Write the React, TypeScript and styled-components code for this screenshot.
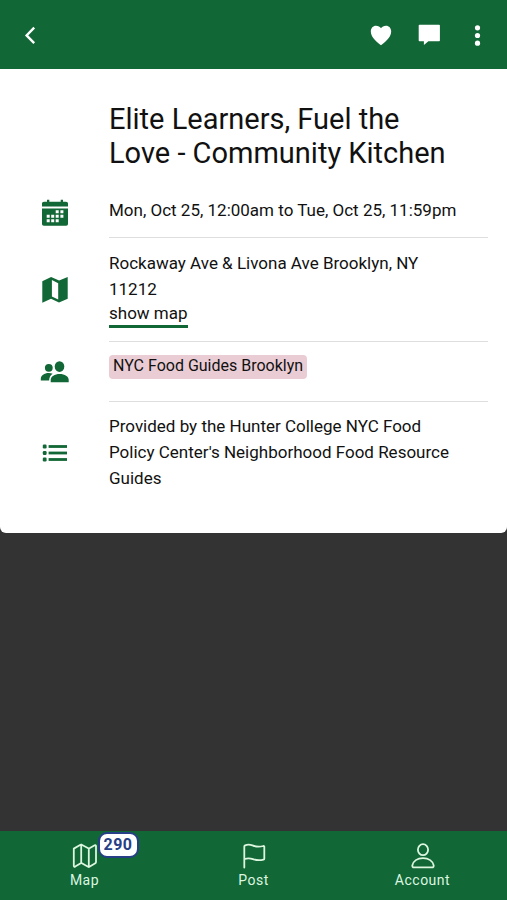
import React from "react";
import styled, { createGlobalStyle } from "styled-components";

const green = "#116735";
const ink = "#111111";

const GlobalStyle = createGlobalStyle`
  * { box-sizing: border-box; }
  body {
    margin: 0;
    background: #333333;
    color: ${ink};
    font-family: Roboto, "Liberation Sans", sans-serif;
    font-size: 17px;
    line-height: 26px;
  }
  button { font: inherit; border: 0; background: none; padding: 0; cursor: pointer; }
  svg { display: block; }
`;

const Page = styled.div`
  min-height: 100vh;
  display: flex;
  flex-direction: column;
`;

const Header = styled.header`
  height: 69px;
  padding: 0 18px;
  display: flex;
  align-items: center;
  justify-content: space-between;
  background: ${green};
`;

const Actions = styled.div`
  display: flex;
  gap: 24px;
`;

const IconButton = styled.button`
  width: 24px;
  height: 24px;
  color: #ffffff;
`;

const Main = styled.main`
  flex: 1;
`;

const Card = styled.article`
  padding: 33px 19px 29px 0;
  background: #ffffff;
  border-radius: 0 0 6px 6px;
`;

const Title = styled.h1`
  margin: 0 0 18px 109px;
  padding-right: 24px;
  font-size: 29px;
  line-height: 34px;
  font-weight: 400;
`;

const Row = styled.section`
  display: grid;
  grid-template-columns: 109px 1fr;
  align-items: center;
`;

const RowIcon = styled.div`
  display: flex;
  justify-content: center;
  color: ${green};
`;

const RowBody = styled.div<{ $top?: number; $bottom?: number; $last?: boolean }>`
  padding: ${(p) => p.$top ?? 12}px 24px ${(p) => p.$bottom ?? 13}px 0;
  border-bottom: ${(p) => (p.$last ? "0" : "1px solid #dedede")};
`;

const Text = styled.p`
  margin: 0;
`;

const MapLink = styled.a`
  display: block;
  width: fit-content;
  line-height: 23px;
  color: inherit;
  text-decoration: none;
  border-bottom: 3px solid ${green};
`;

const Tag = styled.span`
  display: block;
  width: fit-content;
  padding: 0 4px 2px;
  border-radius: 4px;
  background: #eaccd4;
  font-size: 16px;
  line-height: 22px;
`;

const Nav = styled.nav`
  position: sticky;
  bottom: 0;
  height: 69px;
  display: grid;
  grid-template-columns: repeat(3, 1fr);
  background: ${green};
`;

const Tab = styled.button`
  && {
    display: flex;
    flex-direction: column;
    align-items: center;
    padding-top: 12px;
    gap: 2px;
    color: #dcf6e0;
    font-size: 14px;
    line-height: 18px;
    letter-spacing: 0.5px;
  }
`;

const TabIcon = styled.span`
  position: relative;
`;

const Badge = styled.span`
  position: absolute;
  left: 26px;
  top: -11px;
  padding: 1px 4px;
  border: 2px solid #263f86;
  border-radius: 9px;
  background: #ffffff;
  color: #263f86;
  font-size: 16px;
  line-height: 20px;
  font-weight: 700;
`;

const BackIcon = () => (
  <svg width="24" height="24" viewBox="0 0 24 24" fill="none" stroke="currentColor" strokeWidth="2.4" aria-hidden="true">
    <path d="M16.2 4.7 8.6 12.4l7.6 7.7" />
  </svg>
);

const HeartIcon = () => (
  <svg width="24" height="24" viewBox="0 0 24 24" fill="currentColor" aria-hidden="true">
    <path d="M12 22.300C9 19.800 1.800 14.600 1.800 8.500c0-3.400 2.200-5.700 5.200-5.700 2.200 0 4 .9 5 2.500 1-1.600 2.800-2.500 5-2.500 3 0 5.200 2.300 5.200 5.700 0 6.100-7.200 11.300-10.200 13.800z" />
  </svg>
);

const CommentIcon = () => (
  <svg width="24" height="24" viewBox="0 0 24 24" fill="currentColor" aria-hidden="true">
    <path d="M2.500 1.800h19.600c.5 0 .8.300.8.800v14.900c0 .5-.3.800-.8.800H11.400l-4.500 3.700v-3.700H2.500c-.5 0-.8-.3-.8-.8V2.600c0-.5.300-.8.800-.8z" />
  </svg>
);

const MoreIcon = () => (
  <svg width="24" height="24" viewBox="0 0 24 24" fill="currentColor" aria-hidden="true">
    <circle cx="12.5" cy="4.800" r="2.600" />
    <circle cx="12.5" cy="12.500" r="2.600" />
    <circle cx="12.5" cy="20.200" r="2.600" />
  </svg>
);

const CalendarIcon = () => (
  <svg width="28" height="28" viewBox="0 0 28 28" fill="currentColor" aria-hidden="true">
    <path d="M1 7.500V4.500C1 3.400 1.900 2.700 3 2.700h3V.8h2.300v1.900h11.400V.8H22v1.900h3c1.100 0 2 .7 2 1.800v3z" />
    <path
      fillRule="evenodd"
      d="M1 9.600h26v15.200c0 1.300-.6 1.900-1.900 1.900H2.900C1.600 26.700 1 26.100 1 24.800zM14.700 11.200v3h3v-3zm4.700 0v3h3v-3zM5.700 15.800v3h3v-3zm4.500 0v3h3v-3zm4.500 0v3h3v-3zm4.700 0v3h3v-3zM5.700 20.300v3h3v-3zm4.500 0v3h3v-3zm4.500 0v3h3v-3z"
    />
  </svg>
);

const MapFilledIcon = () => (
  <svg width="28" height="28" viewBox="0 0 28 28" fill="currentColor" aria-hidden="true">
    <path
      fillRule="evenodd"
      d="M1.300 5.300 10.100 1l8 3.600L26.700 1v21.700L18 26.500l-8-3.800-8.700 4zM10.900 4v16.400l6.300 3V7.200z"
    />
  </svg>
);

const PeopleIcon = () => (
  <svg width="30" height="28" viewBox="0 0 30 28" fill="currentColor" aria-hidden="true">
    <ellipse cx="19.500" cy="8.600" rx="4.800" ry="5.300" />
    <path d="M10.700 24.200v-2.300c0-3.500 4-6 9-6s9 2.500 9 6v2.300z" />
    <circle cx="8.800" cy="9.800" r="3.900" />
    <path d="M.8 22.500v-1.600c0-3.400 3.500-5.800 8-5.800 1.500 0 2.700.2 3.800.7-2.200 1.500-3.400 3.800-3.500 6.700z" />
  </svg>
);

const ListIcon = () => (
  <svg width="26" height="26" viewBox="0 0 26 26" fill="currentColor" aria-hidden="true">
    {[6.500, 13, 19.500].map((y) => (
      <g key={y}>
        <rect x=".8" y={y - 1.9} width="3.800" height="3.800" rx="1.200" />
        <rect x="6.600" y={y - 1.4} width="18.400" height="2.800" />
      </g>
    ))}
  </svg>
);

const outline = {
  width: 26,
  height: 26,
  viewBox: "0 0 26 26",
  fill: "none",
  stroke: "currentColor",
  strokeWidth: 1.8,
  strokeLinecap: "round",
  strokeLinejoin: "round",
  "aria-hidden": true,
} as const;

const MapIcon = () => (
  <svg {...outline}>
    <path d="M1.800 5.600 8.500 1.800c.4-.2.8-.2 1.200 0l6.600 3.400c.4.200.8.200 1.200 0l5.200-3c.7-.4 1.300 0 1.300.8v16c0 .6-.2 1-.7 1.300l-5.900 3.500c-.4.300-.9.300-1.300 0l-6.200-3.500c-.4-.2-.8-.2-1.200 0l-5.500 3.300c-.8.400-1.400.1-1.400-.8zM9.200 1.700v18.400M16.800 5.400v18.500" />
  </svg>
);

const FlagIcon = () => (
  <svg {...outline}>
    <path d="M3.300 24.500V3.500c0-.6.300-1 .8-1.200 2-.8 4.700-.9 7.300.1 3.400 1.400 6.500 1.700 11 .6.600-.1.900.2.900.7v12c0 .5-.3.8-.8.9-4 1-6.900.800-10.600-.5-3.300-1.200-6.100-.9-8.600 0" />
  </svg>
);

const AccountIcon = () => (
  <svg {...outline}>
    <ellipse cx="13" cy="6.700" rx="5.100" ry="5.500" />
    <path d="M13 15.200c-5.700 0-9.800 3-10.700 7.300-.2 1 .5 1.900 1.600 1.900h18.200c1.100 0 1.800-.9 1.600-1.900-.9-4.300-5-7.300-10.700-7.300z" />
  </svg>
);

export default function App() {
  return (
    <Page>
      <GlobalStyle />
      <Header>
        <IconButton aria-label="Back"><BackIcon /></IconButton>
        <Actions>
          <IconButton aria-label="Favorite"><HeartIcon /></IconButton>
          <IconButton aria-label="Comment"><CommentIcon /></IconButton>
          <IconButton aria-label="More options"><MoreIcon /></IconButton>
        </Actions>
      </Header>
      <Main>
        <Card>
          <Title>Elite Learners, Fuel the Love - Community Kitchen</Title>
          <Row>
            <RowIcon><CalendarIcon /></RowIcon>
            <RowBody $top={9} $bottom={14}>
              <Text>Mon, Oct 25, 12:00am to Tue, Oct 25, 11:59pm</Text>
            </RowBody>
          </Row>
          <Row>
            <RowIcon><MapFilledIcon /></RowIcon>
            <RowBody>
              <Text>Rockaway Ave &amp; Livona Ave Brooklyn, NY 11212</Text>
              <MapLink href="#map">show map</MapLink>
            </RowBody>
          </Row>
          <Row>
            <RowIcon><PeopleIcon /></RowIcon>
            <RowBody $top={13} $bottom={22}>
              <Tag>NYC Food Guides Brooklyn</Tag>
            </RowBody>
          </Row>
          <Row>
            <RowIcon><ListIcon /></RowIcon>
            <RowBody $top={11} $last>
              <Text>
                Provided by the Hunter College NYC Food Policy Center's Neighborhood Food Resource Guides
              </Text>
            </RowBody>
          </Row>
        </Card>
      </Main>
      <Nav>
        <Tab>
          <TabIcon><MapIcon /><Badge>290</Badge></TabIcon>
          Map
        </Tab>
        <Tab>
          <TabIcon><FlagIcon /></TabIcon>
          Post
        </Tab>
        <Tab>
          <TabIcon><AccountIcon /></TabIcon>
          Account
        </Tab>
      </Nav>
    </Page>
  );
}
